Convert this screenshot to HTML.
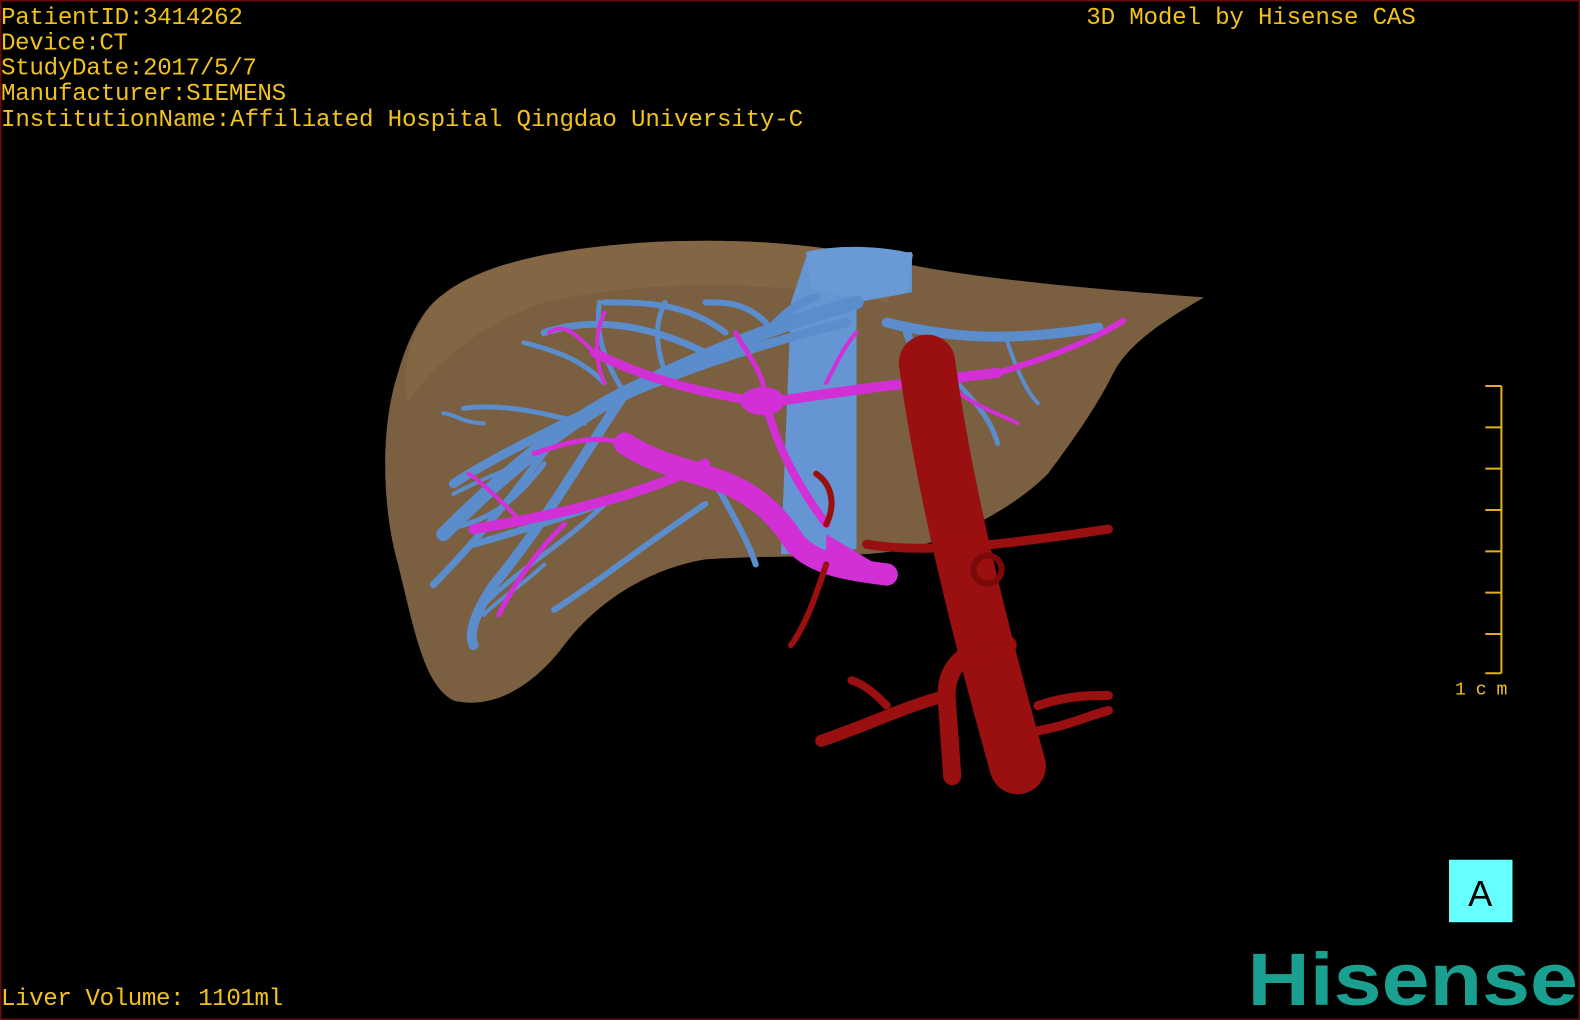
<!DOCTYPE html>
<html><head><meta charset="utf-8"><style>
html,body{margin:0;padding:0;background:#000;width:1580px;height:1020px;overflow:hidden}
svg{display:block}
text{font-family:"Liberation Mono","DejaVu Sans Mono",monospace}
</style></head><body>
<svg width="1580" height="1020" viewBox="0 0 1568 1012" preserveAspectRatio="none">
<rect x="0" y="0" width="1568" height="1012" fill="#000"/>
<rect x="0.5" y="0.5" width="1567" height="1011" fill="none" stroke="#6a0a0a" stroke-width="2"/>
<g fill="#f2c21c" font-size="24">
<text x="1" y="24" textLength="240">PatientID:3414262</text>
<text x="1" y="49" textLength="126">Device:CT</text>
<text x="1" y="74" textLength="254">StudyDate:2017/5/7</text>
<text x="1" y="99" textLength="283">Manufacturer:SIEMENS</text>
<text x="1" y="125" textLength="796">InstitutionName:Affiliated Hospital Qingdao University-C</text>
<text x="1078" y="24" textLength="327">3D Model by Hisense CAS</text>
<text x="1" y="997" textLength="280">Liver Volume: 1101ml</text>
<text x="1444" y="689" font-size="18" textLength="52">1cm</text>
</g>
<g stroke="#e0b020" stroke-width="2">
<line x1="1490" y1="383" x2="1490" y2="668"/>
<line x1="1474" y1="383" x2="1490" y2="383"/><line x1="1474" y1="424" x2="1490" y2="424"/>
<line x1="1474" y1="465" x2="1490" y2="465"/><line x1="1474" y1="506" x2="1490" y2="506"/>
<line x1="1474" y1="547" x2="1490" y2="547"/><line x1="1474" y1="588" x2="1490" y2="588"/>
<line x1="1474" y1="629" x2="1490" y2="629"/><line x1="1474" y1="668" x2="1490" y2="668"/>
</g>
<rect x="1438" y="853" width="63" height="62" fill="#66ffff"/>
<text x="1469" y="899" font-size="36" text-anchor="middle" fill="#000" style="font-family:'Liberation Sans',sans-serif">A</text>
<text x="1238" y="997" font-size="74" fill="#1aa090" font-weight="bold" style="font-family:'Liberation Sans',sans-serif" textLength="328" lengthAdjust="spacingAndGlyphs">Hisense</text>
<path d="M440,292 C480,260 560,245 650,240 C740,236 820,242 900,262 C980,278 1100,288 1195,295 C1160,315 1120,340 1105,370 C1090,400 1070,430 1040,470 C1010,500 960,530 900,545 C840,555 770,550 700,555 C640,565 590,600 560,640 C530,680 490,705 450,695 C420,680 410,620 395,560 C378,500 378,420 395,370 C405,335 420,305 440,292 Z" fill="#7a5f40"/>
<path d="M440,292 C480,260 560,245 650,240 C740,236 820,242 900,262 L880,300 C780,280 650,275 540,300 C480,320 430,360 405,400 C395,360 415,310 440,292Z" fill="#8c6d48" opacity="0.5"/>
<path d="M800,255 L905,250 L905,290 L850,300 L850,545 L775,550 L785,300 Z" fill="#6595d2"/>
<path d="M800,250 C830,242 880,244 906,252 L900,290 C870,300 830,295 805,285 Z" fill="#6a9ad6"/>
<g stroke="#5b8ccb" stroke-linecap="round" fill="none">
<path d="M850,300 C780,320 700,350 620,390 C560,420 500,470 440,530" stroke-width="14"/>
<path d="M840,320 C760,340 660,370 560,420 C520,440 480,460 450,480" stroke-width="9"/>
<path d="M620,390 C580,450 540,520 490,580 C470,610 465,630 470,640" stroke-width="10"/>
<path d="M560,420 C520,480 470,540 430,580" stroke-width="7"/>
<path d="M700,350 C660,330 600,310 540,330" stroke-width="7"/>
<path d="M720,330 C680,300 640,300 600,300" stroke-width="6"/>
<path d="M760,320 C740,300 720,300 700,300" stroke-width="6"/>
<path d="M880,320 C940,335 1000,340 1090,325" stroke-width="10"/>
<path d="M900,330 C920,380 930,420 920,450" stroke-width="8"/>
<path d="M650,480 C600,500 540,520 470,540" stroke-width="7"/>
<path d="M700,500 C640,540 590,580 550,605" stroke-width="6"/>
<path d="M480,420 C460,420 450,410 440,410" stroke-width="4"/>
<path d="M520,460 C490,470 470,480 450,490" stroke-width="4"/>
<path d="M520,340 C560,350 580,360 600,380" stroke-width="5"/>
<path d="M950,380 C970,400 985,420 990,440" stroke-width="5"/>
<path d="M620,390 C600,360 590,330 595,300" stroke-width="5"/>
<path d="M660,370 C650,340 650,320 660,300" stroke-width="5"/>
<path d="M580,420 C540,410 500,400 460,405" stroke-width="5"/>
<path d="M540,460 C510,500 480,520 440,525" stroke-width="5"/>
<path d="M600,500 C560,540 520,560 480,600" stroke-width="5"/>
<path d="M700,460 C720,500 740,530 750,560" stroke-width="6"/>
<path d="M760,330 C780,310 790,300 810,295" stroke-width="8"/>
<path d="M1000,340 C1010,370 1020,390 1030,400" stroke-width="4"/>
<path d="M540,560 C520,580 500,590 480,610" stroke-width="4"/>
</g>
<g stroke="#d22fd6" stroke-linecap="round" fill="none">
<path d="M620,440 C680,480 740,460 790,540 C810,560 840,565 880,570" stroke-width="22"/>
<path d="M760,400 C820,390 900,380 990,370" stroke-width="10"/>
<path d="M760,400 C700,390 650,380 590,350" stroke-width="9"/>
<path d="M760,400 C770,440 790,480 820,520" stroke-width="8"/>
<path d="M700,460 C640,490 560,510 470,525" stroke-width="10"/>
<path d="M990,370 C1040,355 1080,340 1115,318" stroke-width="6"/>
<path d="M560,520 C530,550 510,580 495,610" stroke-width="5"/>
<path d="M620,440 C590,430 560,440 530,450" stroke-width="5"/>
<path d="M760,400 C760,370 740,350 730,330" stroke-width="5"/>
<path d="M940,380 C960,400 990,410 1010,420" stroke-width="4"/>
<path d="M590,350 C570,330 560,320 545,330" stroke-width="4"/>
<path d="M600,380 C590,360 590,330 600,310" stroke-width="4"/>
<path d="M820,380 C830,360 840,340 850,330" stroke-width="4"/>
<path d="M520,520 C500,500 480,480 465,470" stroke-width="4"/>
</g>
<ellipse cx="757" cy="398" rx="22" ry="14" fill="#d22fd6"/>
<path d="M820,530 L890,572 L860,578 L820,565 Z" fill="#d22fd6"/>
<g stroke="#9a0f0f" stroke-linecap="round" fill="none">
<path d="M920,360 C935,470 965,600 1010,760" stroke-width="56"/>
<path d="M860,540 C920,550 1000,540 1100,525" stroke-width="9"/>
<path d="M1000,640 C960,640 935,660 940,700 L945,770" stroke-width="18"/>
<path d="M940,690 C900,700 860,720 815,735" stroke-width="12"/>
<path d="M880,700 C870,690 860,680 845,675" stroke-width="8"/>
<path d="M1030,700 C1060,690 1080,690 1100,690" stroke-width="9"/>
<path d="M1030,725 C1060,720 1080,710 1100,705" stroke-width="9"/>
<path d="M820,560 C810,590 800,620 785,640" stroke-width="6"/>
<path d="M810,470 C825,480 830,500 820,520" stroke-width="6"/>
</g>
<circle cx="980" cy="565" r="14" fill="none" stroke="#7a0a0a" stroke-width="6"/>
</svg>
</body></html>
